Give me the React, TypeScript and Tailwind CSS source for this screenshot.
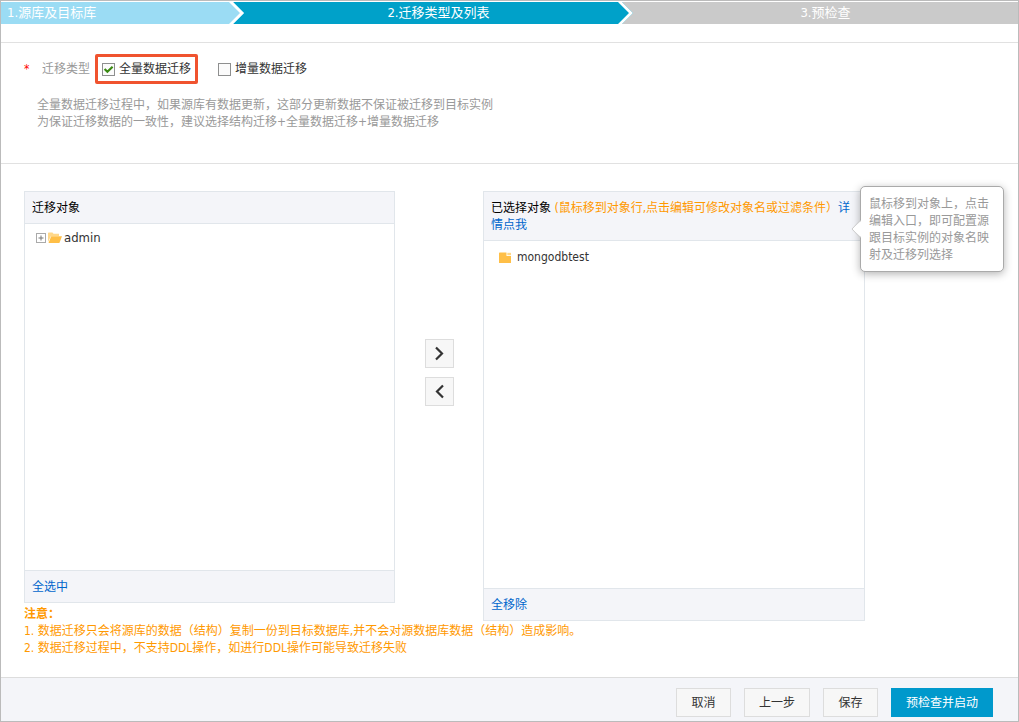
import type { ReactNode } from "react";

const steps = [
  { label: "1.源库及目标库", box: "flex-[243] bg-[#9bdcf4]", text: "ml-[6px]", next: "#00a1c9" },
  { label: "2.迁移类型及列表", box: "flex-[389] bg-[#00a1c9] text-center", text: "", next: "#cacaca" },
  { label: "3.预检查", box: "flex-[385] bg-[#cacaca] text-center", text: "", next: null },
];

function Steps() {
  return (
    <ol className="mt-px flex h-[22px] text-[13px] leading-[22px] text-white">
      {steps.map((s) => (
        <li key={s.label} className={`relative whitespace-nowrap ${s.box}`}>
          <span className={s.text}>{s.label}</span>
          {s.next && (
            <svg className="absolute top-0 right-0" width="15" height="22" viewBox="0 0 15 22">
              <path d="M4 0H15V22H4L15 11Z" fill={s.next} />
              <path d="M0 0H4L15 11L4 22H0L11 11Z" fill="#fff" />
            </svg>
          )}
        </li>
      ))}
    </ol>
  );
}

function Check({ label, checked }: { label: string; checked?: boolean }) {
  return (
    <label className="flex items-center gap-[4px] text-[#333]">
      <span className="relative flex">
        <input
          type="checkbox"
          defaultChecked={checked}
          className="peer size-[13px] appearance-none border border-[#8e8f8f] bg-[#fbfbfb]"
        />
        <svg
          className="pointer-events-none absolute top-0 left-0 hidden peer-checked:block"
          width="13"
          height="13"
          viewBox="0 0 13 13"
        >
          <path d="M2.6 6L5.4 8.8L10.6 3.8" fill="none" stroke="#3a8a12" strokeWidth="2.2" />
        </svg>
      </span>
      {label}
    </label>
  );
}

function Panel({ title, children, action }: { title: ReactNode; children: ReactNode; action: string }) {
  return (
    <section className="border border-[#e1e6eb]">
      <header className="border-b border-[#e1e6eb] bg-[#f4f5f9] px-[7px] pt-[8px] pb-[6px] text-black">
        {title}
      </header>
      {children}
      <footer className="flex border-t border-[#e1e6eb] bg-[#f4f5f9] px-[7px] pt-[8px] pb-[6px]">
        <a href="#" className="text-[#06c]">{action}</a>
      </footer>
    </section>
  );
}

function MoveButton({ label, d }: { label: string; d: string }) {
  return (
    <button
      type="button"
      aria-label={label}
      className="flex size-[29px] items-center justify-center border border-[#ddd] bg-[#f7f7f7]"
    >
      <svg width="13" height="15" viewBox="0 0 13 15">
        <path d={d} fill="none" stroke="#333" strokeWidth="2.2" />
      </svg>
    </button>
  );
}

function Tip() {
  return (
    <div className="absolute -top-[5px] -right-[139px] w-[144px] rounded-[5px] border border-[#aaa] bg-white px-[8px] pt-[9px] pb-[7px] text-[#999] shadow-[0_2px_8px_rgba(0,0,0,0.3)]">
      <svg className="absolute top-[32px] -left-[10px]" width="11" height="20" viewBox="0 0 11 20">
        <path d="M11 1L1 10L11 19Z" fill="#fff" />
        <path d="M9.5 1L1 10L9.5 19" fill="none" stroke="#ccc" />
      </svg>
      鼠标移到对象上，点击编辑入口，即可配置源跟目标实例的对象名映射及迁移列选择
    </div>
  );
}

const plain = "h-[29px] min-w-[55px] border border-[#ddd] bg-[#f7f7f7] px-[14px] pt-[2px] text-[#333]";

export default function App() {
  return (
    <main className="border border-[#bbb] bg-white font-['DejaVu_Sans_Condensed','Noto_Sans_CJK_SC',sans-serif] text-[12px] leading-[17px]">
      <Steps />

      <div className="mt-[18px] border-y border-[#e1e1e1] pt-[11px] pb-[32px] pl-[23px] text-[#999]">
        <div className="flex items-center">
          <span className="w-[18px] text-[#f00]">*</span>
          <span className="w-[53px]">迁移类型</span>
          <div className="mr-[20px] rounded-[2px] border-[3px] border-[#f0532f] px-[4px] pt-[4px] pb-[3px]">
            <Check label="全量数据迁移" checked />
          </div>
          <Check label="增量数据迁移" />
        </div>
        <p className="mt-[13px] pl-[13px]">
          全量数据迁移过程中，如果源库有数据更新，这部分更新数据不保证被迁移到目标实例
          <br />
          为保证迁移数据的一致性，建议选择结构迁移+全量数据迁移+增量数据迁移
        </p>
      </div>

      <div className="grid grid-cols-[minmax(0,371fr)_88px_minmax(0,382fr)] items-start pt-[27px] pr-[153px] pb-[20px] pl-[23px]">
        <div>
          <Panel title="迁移对象" action="全选中">
            <div className="min-h-[346px] pt-[5px] pl-[11px]">
              <div className="flex items-center text-[#333]">
                <svg width="10" height="10" viewBox="0 0 10 10">
                  <rect x="0.5" y="0.5" width="9" height="9" fill="#fff" stroke="#aaa" />
                  <path d="M2.5 5H7.5M5 2.5V7.5" stroke="#777" />
                </svg>
                <svg className="ml-[2px]" width="14" height="11" viewBox="0 0 14 11">
                  <path d="M0 10V1.2Q0 0.5 0.7 0.5H4.5L5.5 1.7H11V4H3Z" fill="#ffd88a" />
                  <path d="M0.5 11L3.2 4.2H14L11.4 11Z" fill="#ffbf47" />
                </svg>
                <span className="ml-[2px] text-[13px]">admin</span>
              </div>
            </div>
          </Panel>
          <div className="pt-[3px] whitespace-nowrap text-[#f90]">
            <p className="font-bold">注意：</p>
            <p>1. 数据迁移只会将源库的数据（结构）复制一份到目标数据库,并不会对源数据库数据（结构）造成影响。</p>
            <p>2. 数据迁移过程中，不支持DDL操作，如进行DDL操作可能导致迁移失败</p>
          </div>
        </div>

        <div className="flex flex-col items-center gap-[9px] pt-[148px]">
          <MoveButton label="添加所选对象" d="M3 1.5L9 7.5L3 13.5" />
          <MoveButton label="移除所选对象" d="M10 1.5L4 7.5L10 13.5" />
        </div>

        <div className="relative">
          <Panel
            title={
              <>
                已选择对象 <span className="text-[#f90]">(鼠标移到对象行,点击编辑可修改对象名或过滤条件）</span>
                <a href="#" className="text-[#06c]">详情点我</a>
              </>
            }
            action="全移除"
          >
            <div className="min-h-[347px] pt-[8px] pl-[15px]">
              <div className="flex items-center text-[#333]">
                <svg width="12" height="11" viewBox="0 0 12 11">
                  <path d="M0 11V1.2Q0 0.5 0.7 0.5H7.5V4H12V11Z" fill="#ffbf47" />
                  <path d="M8.3 0.8H12V3.2H8.3Z" fill="#ffd88a" />
                </svg>
                <span className="ml-[6px]">mongodbtest</span>
              </div>
            </div>
          </Panel>
          <Tip />
        </div>
      </div>

      <div className="flex justify-end border-t border-[#ddd] bg-[#f4f5f9] pt-[10px] pr-[25px] pb-[4px]">
        <div className="flex gap-[13px]">
          <button type="button" className={plain}>取消</button>
          <button type="button" className={plain}>上一步</button>
          <button type="button" className={plain}>保存</button>
          <button type="button" className="h-[29px] bg-[#09c] px-[15px] pt-[2px] text-white">预检查并启动</button>
        </div>
      </div>
    </main>
  );
}
